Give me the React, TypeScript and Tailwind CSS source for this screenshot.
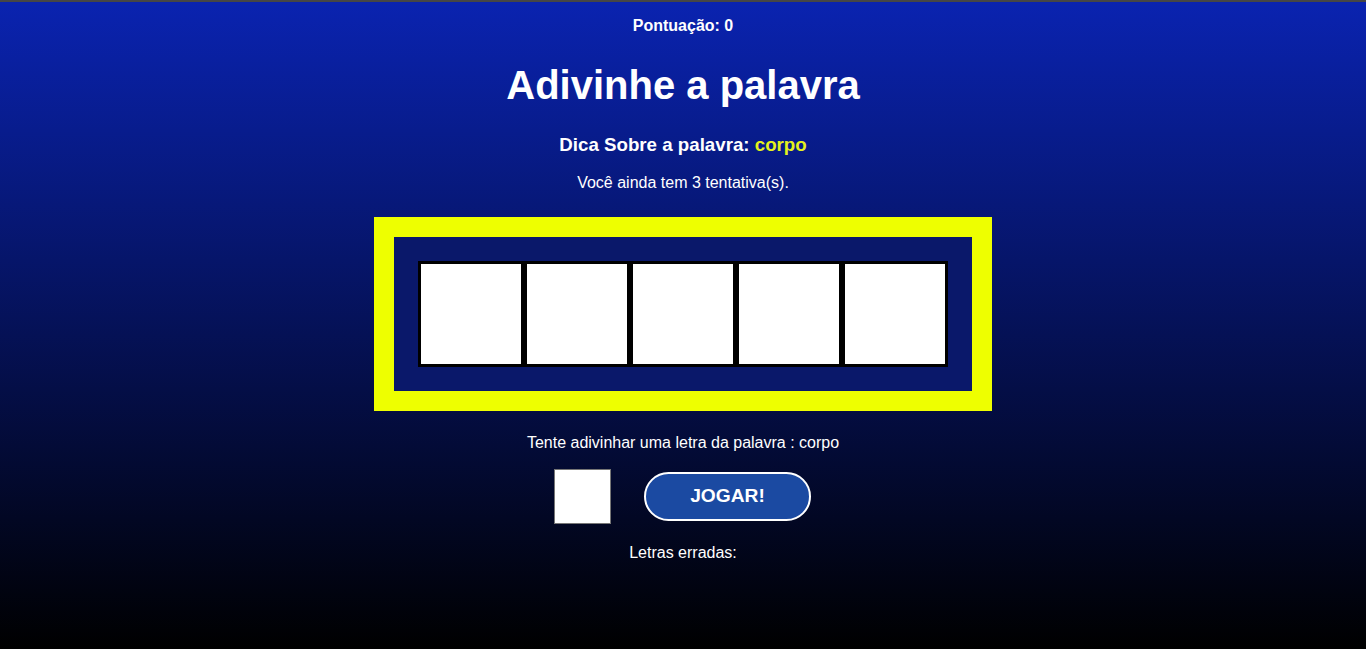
export default function App() {
  const cells = [0, 1, 2, 3, 4];
  return (
    <div className="min-h-screen h-[649px] border-t-2 border-[#464646] bg-[linear-gradient(to_bottom,#0a23b0,#000000)] text-white font-['Liberation_Sans',Arial,sans-serif] flex flex-col items-center">
      <p className="mt-[15px] text-[16px] leading-[18px] font-bold">Pontuação: 0</p>
      <h1 className="mt-[27px] text-[40px] leading-[46px] font-bold">Adivinhe a palavra</h1>
      <p className="mt-[26px] text-[18.72px] leading-[21px] font-bold">
        Dica Sobre a palavra: <span className="text-[#e4f21c]">corpo</span>
      </p>
      <p className="mt-[19px] text-[16px] leading-[18px]">Você ainda tem 3 tentativa(s).</p>

      <div className="mt-[25px] border-[20px] border-[#eeff00] bg-[#0a186a] p-[24px] flex">
        {cells.map((i) => (
          <div key={i} className="w-[106px] h-[106px] bg-white border-[3px] border-black" />
        ))}
      </div>

      <p className="mt-[23px] text-[16px] leading-[18px]">Tente adivinhar uma letra da palavra : corpo</p>

      <div className="mt-[17px] flex items-center gap-[33px] pr-[1px]">
        <input
          type="text"
          maxLength={1}
          className="w-[57px] h-[55px] bg-white border border-[#767676] text-black text-center outline-none"
        />
        <button className="w-[167px] h-[49px] rounded-full bg-[#1b4aa2] border-2 border-white text-[19.2px] font-bold">
          JOGAR!
        </button>
      </div>

      <p className="mt-[20px] text-[16px] leading-[18px]">Letras erradas:</p>
    </div>
  );
}
